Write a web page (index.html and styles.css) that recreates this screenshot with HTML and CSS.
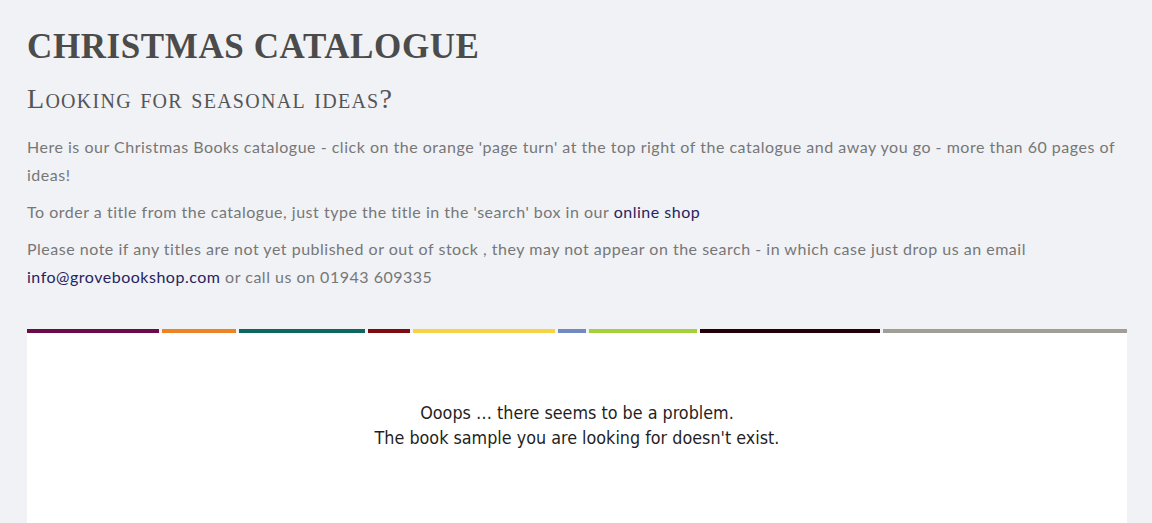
FILE: index.html
```html
<!DOCTYPE html>
<html lang="en">
<head>
<meta charset="utf-8">
<title>Christmas Catalogue</title>
<link rel="stylesheet" href="styles.css">
</head>
<body>
<main class="page">
  <h1 class="title">Christmas Catalogue</h1>
  <h2 class="subtitle">Looking for seasonal ideas?</h2>
  <p class="text">Here is our Christmas Books catalogue - click on the orange 'page turn' at the top right of the catalogue and away you go - more than 60 pages of ideas!</p>
  <p class="text">To order a title from the catalogue, just type the title in the 'search' box in our <a class="link" href="#">online shop</a></p>
  <p class="text">Please note if any titles are not yet published or out of stock , they may not appear on the search - in which case just drop us an email <a class="link" href="#">info@grovebookshop.com</a> or call us on 01943 609335</p>
  <section class="viewer">
    <div class="stripes">
      <span class="stripe s1"></span>
      <span class="stripe s2"></span>
      <span class="stripe s3"></span>
      <span class="stripe s4"></span>
      <span class="stripe s5"></span>
      <span class="stripe s6"></span>
      <span class="stripe s7"></span>
      <span class="stripe s8"></span>
      <span class="stripe s9"></span>
    </div>
    <div class="frame">
      <p class="error">Ooops … there seems to be a problem.<br>The book sample you are looking for doesn't exist.</p>
    </div>
  </section>
</main>
</body>
</html>
```

FILE: styles.css
```css
html, body {
  margin: 0;
  padding: 0;
}
body {
  background: #f0f2f6;
  font-family: "Lato", "Open Sans", sans-serif;
  height: 523px;
  overflow: hidden;
}
.page {
  width: 1100px;
  padding: 27px 25px 0 27px;
}
.title {
  margin: 0;
  font-family: "Liberation Serif", serif;
  font-weight: bold;
  text-transform: uppercase;
  font-size: 35px;
  line-height: 40px;
  letter-spacing: 0.6px;
  color: #4b4b4b;
}
.subtitle {
  margin: 16px 0 0;
  font-family: "Liberation Serif", serif;
  font-weight: normal;
  font-variant: small-caps;
  font-size: 28px;
  line-height: 32px;
  letter-spacing: 1.28px;
  color: #555555;
}
.text {
  margin: 9px 0 0;
  font-size: 16px;
  line-height: 28px;
  color: #777777;
  letter-spacing: 0.51px;
}
.subtitle + .text {
  margin-top: 18px;
}
.link {
  color: #27235f;
  text-decoration: none;
}
.viewer {
  margin-top: 38px;
}
.stripes {
  display: flex;
  gap: 3px;
  height: 4px;
}
.stripe { height: 4px; }
.s1 { width: 132px; background: #6a0c4a; }
.s2 { width: 74px; background: #ee8323; }
.s3 { width: 126px; background: #0e6661; }
.s4 { width: 42px; background: #7c0c10; }
.s5 { width: 142px; background: #f8d342; }
.s6 { width: 28px; background: #7289c2; }
.s7 { width: 108px; background: #a5cf3b; }
.s8 { width: 180px; background: #260009; }
.s9 { width: 244px; background: #a19e95; }
.frame {
  box-sizing: border-box;
  background: #ffffff;
  height: 190px;
  padding-top: 67px;
}
.error {
  margin: 0;
  text-align: center;
  font-family: "DejaVu Sans Condensed", "DejaVu Sans", sans-serif;
  font-size: 17.8px;
  line-height: 25px;
  color: #1f1f1f;
}
```
